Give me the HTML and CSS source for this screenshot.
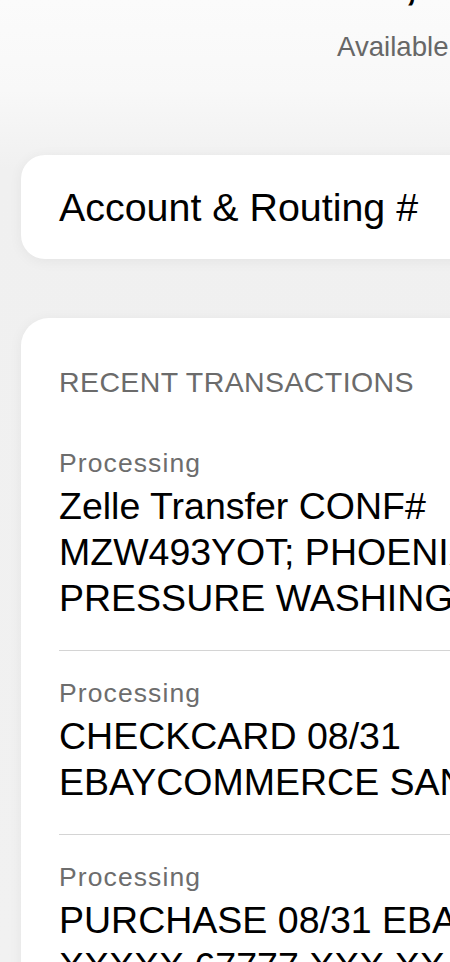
FILE: index.html
```html
<!DOCTYPE html>
<html lang="en">
<head>
<meta charset="utf-8">
<title>Account</title>
<link rel="stylesheet" href="styles.css">
</head>
<body>
<div class="screen">
  <section class="summary">
    <div class="balance">1,250.00</div>
    <div class="available">Available balance</div>
  </section>

  <section class="card link-card">
    <span class="link-label">Account &amp; Routing #</span>
  </section>

  <section class="card tx-card">
    <h2 class="tx-heading">RECENT TRANSACTIONS</h2>
    <ul class="tx-list">
      <li class="tx-item">
        <div class="tx-status">Processing</div>
        <div class="tx-desc">
          <span class="tx-line">Zelle Transfer CONF#</span>
          <span class="tx-line">MZW493YOT; PHOENIX</span>
          <span class="tx-line">PRESSURE WASHING LLC</span>
        </div>
      </li>
      <li class="tx-item">
        <div class="tx-status">Processing</div>
        <div class="tx-desc">
          <span class="tx-line">CHECKCARD 08/31</span>
          <span class="tx-line">EBAYCOMMERCE SAN JOSE CA</span>
        </div>
      </li>
      <li class="tx-item">
        <div class="tx-status">Processing</div>
        <div class="tx-desc">
          <span class="tx-line">PURCHASE 08/31 EBAY</span>
          <span class="tx-line">XXXXX 67777 XXX XX</span>
        </div>
      </li>
    </ul>
  </section>
</div>
</body>
</html>
```

FILE: styles.css
```css
html, body {
  margin: 0;
  padding: 0;
  overflow: hidden;
}

body {
  width: 450px;
  height: 962px;
  background: linear-gradient(to bottom, #fbfbfb 0px, #f8f8f8 90px, #f0f0f0 170px, #f1f1f1 100%);
  font-family: "Liberation Sans", Arial, sans-serif;
  color: #0d0d0d;
}

.screen {
  width: 640px;
  display: flex;
  flex-direction: column;
}

.summary {
  display: flex;
  flex-direction: column;
}

.balance {
  font-size: 42px;
  font-weight: 700;
  line-height: 42px;
  height: 42px;
  margin-top: -36px;
  padding-left: 382px;
  color: #000;
  white-space: nowrap;
}

.available {
  margin-top: 24px;
  padding-left: 337px;
  font-size: 27.6px;
  line-height: 34px;
  color: #676767;
  white-space: nowrap;
}

.card {
  background: #ffffff;
  margin: 0 21px;
  box-shadow: 0 2px 14px rgba(0, 0, 0, 0.055);
}

.link-card {
  margin-top: 91px;
  border-radius: 24px;
  padding: 29px 38px;
  height: 46px;
  display: flex;
  align-items: center;
}

.link-label {
  font-size: 39.4px;
  line-height: 46px;
  color: #000;
  white-space: nowrap;
}

.tx-card {
  margin-top: 59px;
  border-radius: 28px 28px 0 0;
  padding: 47px 0 0 38px;
  min-height: 700px;
}

.tx-heading {
  margin: 0;
  font-size: 28.5px;
  font-weight: 400;
  letter-spacing: 0.4px;
  line-height: 34px;
  color: #6b6b6b;
  white-space: nowrap;
}

.tx-list {
  list-style: none;
  margin: 22px 0 0;
  padding: 0;
}

.tx-item {
  padding: 26px 0 29px;
  display: flex;
  flex-direction: column;
  gap: 4px;
}

.tx-item + .tx-item {
  border-top: 1px solid #d4d4d4;
}

.tx-status {
  font-size: 26.5px;
  letter-spacing: 1.1px;
  line-height: 32px;
  color: #6d6d6d;
  white-space: nowrap;
}

.tx-desc {
  display: flex;
  flex-direction: column;
}

.tx-line {
  font-size: 37.5px;
  line-height: 46px;
  color: #000;
  white-space: nowrap;
}
```
